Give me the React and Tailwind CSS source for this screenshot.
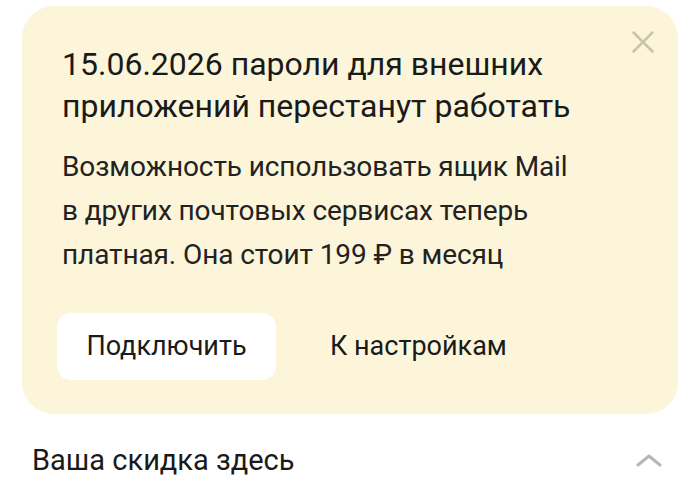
import { X } from "lucide-react";

export default function App() {
  return (
    <div className="w-[700px] h-[495px] bg-white overflow-hidden font-['Roboto',sans-serif] text-[#1a1a1a]">
      <div className="pt-[6px] px-[22px]">
        <div className="relative bg-[#fcf5da] rounded-[32px] pl-[40px] pr-[30px] pt-[37px] h-[408px]">
          <button className="absolute right-[16px] top-[17px] text-[#c9c4ad]">
            <X size={38} strokeWidth={1.6} />
          </button>
          <h1 className="text-[32px] leading-[42px]">
            15.06.2026 пароли для внешних
            <br />
            приложений перестанут работать
          </h1>
          <p className="mt-[18px] text-[28px] leading-[44px] tracking-[-0.1px] text-[#222]">
            Возможность использовать ящик Mail
            <br />
            в других почтовых сервисах теперь
            <br />
            платная. Она стоит 199 ₽ в месяц
          </p>
          <div className="mt-[36px] flex items-center gap-[54px] -ml-[5px]">
            <button className="bg-white rounded-[14px] w-[219px] h-[67px] text-[27px] text-[#1a1a1a]">
              Подключить
            </button>
            <button className="text-[27px] text-[#1a1a1a]">К настройкам</button>
          </div>
        </div>
      </div>
      <div className="flex items-center justify-between pl-[32px] pr-[38px] mt-[26px]">
        <span className="text-[29px] leading-[40px] text-[#1a1a1a]">Ваша скидка здесь</span>
        <svg width="26" height="13" viewBox="0 0 26 13" fill="none">
          <path d="M2 11 L13 2 L24 11" stroke="#b6b6bb" strokeWidth="3" strokeLinecap="round" strokeLinejoin="round" />
        </svg>
      </div>
    </div>
  );
}
